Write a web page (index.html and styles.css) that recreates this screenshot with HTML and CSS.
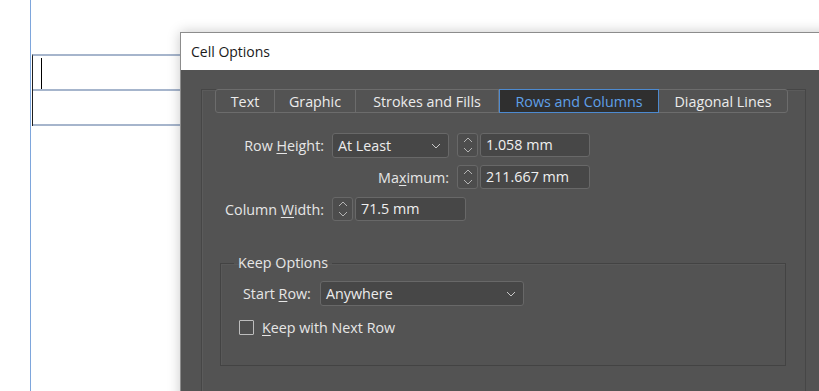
FILE: index.html
```html
<!DOCTYPE html>
<html>
<head>
<meta charset="utf-8">
<link rel="stylesheet" href="styles.css">
</head>
<body>
<div class="page">
  <div class="guide"></div>
  <div class="table">
    <div class="cell"><span class="caret"></span></div>
    <div class="cell"></div>
  </div>

  <div class="dialog">
    <div class="titlebar">Cell Options</div>
    <div class="body">
      <div class="panel">
        <div class="tabs">
          <div class="tab t-text">Text</div>
          <div class="tab t-graphic">Graphic</div>
          <div class="tab t-strokes">Strokes and Fills</div>
          <div class="tab t-rows active">Rows and Columns</div>
          <div class="tab t-diag">Diagonal Lines</div>
        </div>

        <div class="form">
          <div class="label">Row <u>H</u>eight:</div>
          <div class="select sel-height"><span>At Least</span>
            <svg class="chev" width="10" height="6" viewBox="0 0 10 6"><path d="M1 1 L5 5 L9 1" fill="none" stroke="#c8c8c8" stroke-width="1"/></svg>
          </div>
          <div class="numfield">
            <div class="spin"><svg width="10" height="18" viewBox="0 0 10 18"><path d="M1 6 L5 2 L9 6 M1 12 L5 16 L9 12" fill="none" stroke="#b4b4b4" stroke-width="1"/></svg></div>
            <div class="input">1.058 mm</div>
          </div>

          <div class="label span2">Ma<u>x</u>imum:</div>
          <div class="numfield">
            <div class="spin"><svg width="10" height="18" viewBox="0 0 10 18"><path d="M1 6 L5 2 L9 6 M1 12 L5 16 L9 12" fill="none" stroke="#b4b4b4" stroke-width="1"/></svg></div>
            <div class="input">211.667 mm</div>
          </div>

          <div class="label">Column <u>W</u>idth:</div>
          <div class="numfield colw">
            <div class="spin"><svg width="10" height="18" viewBox="0 0 10 18"><path d="M1 6 L5 2 L9 6 M1 12 L5 16 L9 12" fill="none" stroke="#b4b4b4" stroke-width="1"/></svg></div>
            <div class="input">71.5 mm</div>
          </div>
        </div>

        <fieldset class="group">
          <legend>Keep Options</legend>
          <div class="grow">
            <div class="glabel">Start <u>R</u>ow:</div>
            <div class="select sel-start"><span>Anywhere</span>
              <svg class="chev" width="10" height="6" viewBox="0 0 10 6"><path d="M1 1 L5 5 L9 1" fill="none" stroke="#c8c8c8" stroke-width="1"/></svg>
            </div>
          </div>
          <div class="check">
            <span class="box"></span>
            <span><u>K</u>eep with Next Row</span>
          </div>
        </fieldset>
      </div>
    </div>
  </div>
</div>
</body>
</html>
```
FILE: styles.css
```css
html, body {
  margin: 0;
  padding: 0;
  background: #ffffff;
}
.page {
  position: relative;
  width: 819px;
  height: 391px;
  overflow: hidden;
  background: #ffffff;
  font-family: "Open Sans", "Noto Sans", sans-serif;
}
.guide {
  position: absolute;
  left: 30px;
  top: 0;
  width: 1px;
  height: 391px;
  background: #7ea6dc;
}
.table {
  margin: 54px 0 0 32px;
  width: 300px;
  border-left: 1px solid #1e1e1e;
  border-top: 2px solid #a6b5cc;
}
.cell {
  position: relative;
  height: 33px;
  border-bottom: 2px solid #a6b5cc;
}
.caret {
  position: absolute;
  left: 8px;
  top: 2px;
  width: 1px;
  height: 31px;
  background: #000;
}
.dialog {
  position: absolute;
  left: 180px;
  top: 32px;
  width: 680px;
  height: 400px;
  border: 1px solid #8c8c8c;
  box-shadow: 0 0 12px rgba(0, 0, 0, 0.22);
  background: #535353;
}
.titlebar {
  height: 37px;
  background: #ffffff;
  color: #1a1a1a;
  font-size: 14px;
  line-height: 37px;
  padding-left: 10px;
}
.body {
  padding: 19px 0 0 20px;
  background: #535353;
  height: 400px;
}
.panel {
  width: 603px;
  height: 340px;
  border-left: 1px solid #464646;
  border-right: 1px solid #464646;
  border-top: 1px solid #464646;
  box-shadow: 1px 1px 0 rgba(255,255,255,0.05) inset;
}
.tabs {
  display: flex;
  margin: -1px 0 0 13px;
  width: 573px;
  height: 24px;
  border: 1px solid #6c6c6c;
  border-radius: 3px;
  box-sizing: border-box;
  background: #535353;
}
.tab {
  box-sizing: border-box;
  height: 22px;
  padding-top: 1px;
  line-height: 21px;
  text-align: center;
  color: #ececec;
  font-size: 14.3px;
  border-right: 1px solid #6c6c6c;
}
.t-text { width: 59px; }
.t-graphic { width: 81px; }
.t-strokes { width: 143px; }
.t-rows { width: 160px; }
.t-diag { width: 128px; border-right: none; }
.tab.active {
  background: #2f2f2f;
  color: #5fa0e8;
  border: 1px solid #4d8ad0;
  height: 24px;
  line-height: 21px;
  margin-top: -1px;
}
.form {
  display: grid;
  grid-template-columns: 103px 117px 133px;
  column-gap: 8px;
  row-gap: 8px;
  grid-auto-rows: 24px;
  margin: 20px 0 0 19px;
  width: 380px;
}
.label {
  justify-self: end;
  align-self: center;
  padding-top: 1px;
  color: #e6e6e6;
  font-size: 14.3px;
  white-space: nowrap;
}
.label.span2 { grid-column: 1 / span 2; }
u {
  text-decoration: underline;
  text-underline-offset: 2px;
}
.select {
  display: flex;
  align-items: center;
  justify-content: space-between;
  box-sizing: border-box;
  height: 25px;
  padding: 0 7px 0 5px;
  background: #474747;
  border: 1px solid #686868;
  border-radius: 3px;
  color: #ececec;
  font-size: 14.3px;
}
.numfield {
  display: flex;
  gap: 2px;
  height: 24px;
}
.colw { width: 134px; grid-column: 2 / span 2; }
.spin {
  box-sizing: border-box;
  width: 21px;
  height: 24px;
  border: 1px solid #686868;
  border-radius: 3px;
  background: #4d4d4d;
  display: flex;
  align-items: center;
  justify-content: center;
}
.input {
  flex: 1;
  box-sizing: border-box;
  height: 24px;
  line-height: 22px;
  padding-left: 5px;
  border: 1px solid #686868;
  border-radius: 3px;
  background: #474747;
  color: #f0f0f0;
  font-size: 14.3px;
}
.group {
  margin: 34px 0 0 18px;
  width: 566px;
  height: 111px;
  box-sizing: border-box;
  border: 1px solid #434343;
  box-shadow: 1px 1px 0 rgba(255,255,255,0.04) inset;
  padding: 0 0 0 22px;
}
.group legend {
  padding: 0 4px;
  margin-left: -9px;
  color: #e6e6e6;
  font-size: 14.3px;
  line-height: 16px;
}
.grow {
  display: flex;
  align-items: center;
  gap: 5px;
  margin-top: 10px;
}
.glabel {
  width: 72px;
  white-space: nowrap;
  color: #e6e6e6;
  font-size: 14.3px;
}
.sel-start { width: 204px; }
.check {
  display: flex;
  align-items: center;
  gap: 8px;
  margin: 12px 0 0 -4px;
  color: #e6e6e6;
  font-size: 14.3px;
}
.box {
  width: 13px;
  height: 13px;
  border: 1px solid #bdbdbd;
  border-radius: 1px;
  background: #4f4f4f;
}
```
